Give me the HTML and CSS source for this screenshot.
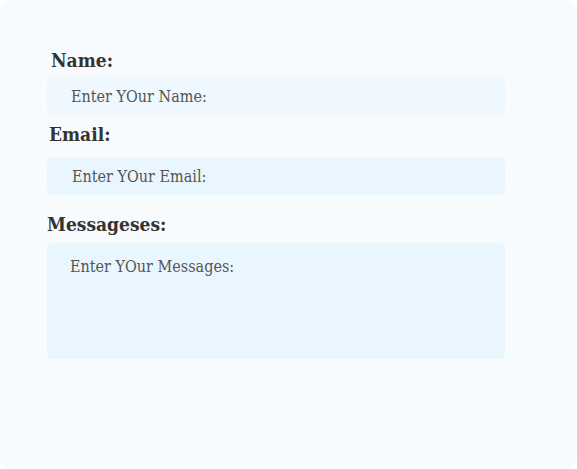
FILE: index.html
```html
<!DOCTYPE html>
<html lang="en">
<head>
<meta charset="utf-8">
<title>Contact form</title>
<link rel="stylesheet" href="styles.css">
</head>
<body>
<div class="card">
  <form class="form">
    <label class="label label-name" for="name">Name:</label>
    <input class="field field-name" id="name" type="text" placeholder="Enter YOur Name:">
    <label class="label label-email" for="email">Email:</label>
    <input class="field field-email" id="email" type="text" placeholder="Enter YOur Email:">
    <label class="label label-msg" for="msg">Messageses:</label>
    <textarea class="field field-msg" id="msg" placeholder="Enter YOur Messages:"></textarea>
  </form>
</div>
</body>
</html>
```

FILE: styles.css
```css
html, body {
  margin: 0;
  padding: 0;
  background: #ffffff;
}
.card {
  box-sizing: border-box;
  width: 577px;
  height: 469px;
  border-radius: 12px;
  background: #f7fbfe;
  padding: 48px 0 0 47px;
  font-family: "DejaVu Serif Condensed", "DejaVu Serif", serif;
}
.form {
  display: flex;
  flex-direction: column;
  width: 458px;
}
.label {
  display: block;
  font-size: 19px;
  line-height: 24px;
  font-weight: 600;
  color: #333333;
}
.label-name { padding-left: 4px; margin-bottom: 5px; }
.label-email { padding-left: 2px; margin-top: 7px; margin-bottom: 11px; }
.label-msg { margin-top: 17px; margin-bottom: 7px; }
.field {
  box-sizing: border-box;
  width: 458px;
  height: 38px;
  border: none;
  outline: none;
  border-radius: 5px;
  background: #eaf6fe;
  font-family: "DejaVu Serif Condensed", "DejaVu Serif", serif;
  font-size: 16px;
  line-height: 20px;
  color: #444444;
  padding: 0 0 0 24px;
  margin: 0;
}
.field::placeholder {
  color: #555555;
  opacity: 1;
}
.field-name { background: #eff8fe; }
.field-email { padding-left: 25px; }
.field-msg {
  height: 116px;
  padding: 14px 0 0 23px;
  resize: none;
  display: block;
}
```
